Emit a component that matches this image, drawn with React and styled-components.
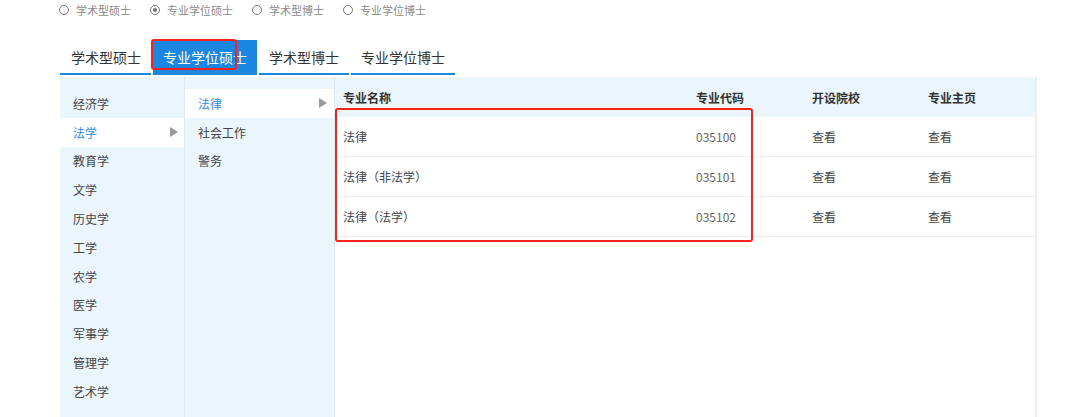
import React from "react";
import styled, { createGlobalStyle } from "styled-components";

const Global = createGlobalStyle`
  html, body { margin: 0; padding: 0; background: #fff; }
  body { font-family: "Noto Sans CJK SC", "Noto Sans", sans-serif; overflow: hidden; }
  * { box-sizing: border-box; }
`;

const Page = styled.div`
  padding-left: 58px;
  width: 1080px;
  height: 417px;
  overflow: hidden;
`;

const RadioRow = styled.div`
  display: flex;
  align-items: center;
  gap: 19px;
  height: 20px;
  padding-left: 1px;
`;

const RadioItem = styled.label`
  display: flex;
  align-items: center;
  gap: 7px;
  font-size: 11px;
  color: #8a8a8a;
  line-height: 20px;
`;

const Circle = styled.span`
  width: 10px;
  height: 10px;
  border: 1px solid #7a7a7a;
  border-radius: 50%;
  display: flex;
  align-items: center;
  justify-content: center;
  &::after {
    content: "";
    width: 4px;
    height: 4px;
    border-radius: 50%;
    background: ${(p) => (p.$checked ? "#6f6f6f" : "transparent")};
  }
`;

const TabBar = styled.div`
  position: relative;
  display: flex;
  gap: 2px;
  margin-top: 20px;
  margin-left: 2px;
  height: 36px;
`;

const Tab = styled.div`
  height: 35px;
  padding: 0 10px 0 ${(p) => (p.$first ? 11 : 10)}px;
  display: flex;
  align-items: center;
  font-size: 14px;
  color: ${(p) => (p.$active ? "#fff" : "#333")};
  background: ${(p) => (p.$active ? "#1b87e0" : "transparent")};
  border-bottom: 2px solid #1b87e0;
`;

const Annotation = styled.div`
  position: absolute;
  border: 2.5px solid #f5231b;
  border-radius: 3px;
  pointer-events: none;
`;

const Panel = styled.div`
  display: flex;
  margin-top: 1px;
  margin-left: 2px;
  width: 977px;
  height: 360px;
`;

const MenuCol = styled.div`
  width: ${(p) => p.$w}px;
  flex: none;
  background: #eaf5fc;
  border-right: 1px solid #dde9f2;
  padding-top: 12px;
`;

const MenuItem = styled.div`
  height: 28.8px;
  display: flex;
  align-items: center;
  justify-content: space-between;
  padding: 0 ${(p) => p.$pr}px 0 13px;
  font-size: 12px;
  color: ${(p) => (p.$active ? "#2a8be2" : "#444")};
  background: ${(p) => (p.$active ? "#fff" : "transparent")};
`;

const Arrow = styled.span`
  width: 0;
  height: 0;
  border-top: 5px solid transparent;
  border-bottom: 5px solid transparent;
  border-left: 8px solid #9a9a9a;
`;

const TableWrap = styled.div`
  position: relative;
  flex: 1;
  border-right: 2px solid #eeeeee;
  background: #fff;
`;

const Grid = styled.div`
  display: grid;
  grid-template-columns: 353px 116px 116px 1fr;
`;

const HeadCell = styled.div`
  height: 40px;
  background: #eaf5fc;
  display: flex;
  align-items: center;
  padding-left: 8px;
  font-size: 12px;
  font-weight: 700;
  color: #333;
  border-top: 1px solid #f0f6fa;
`;

const Cell = styled.div`
  height: 40px;
  display: flex;
  align-items: center;
  padding-left: 8px;
  font-size: 12px;
  color: ${(p) => (p.$num ? "#666" : "#444")};
  border-bottom: 1px solid #eeeeee;
`;

const radios = [
  { label: "学术型硕士" },
  { label: "专业学位硕士", checked: true },
  { label: "学术型博士" },
  { label: "专业学位博士" },
];

const tabs = ["学术型硕士", "专业学位硕士", "学术型博士", "专业学位博士"];

const subjects = ["经济学", "法学", "教育学", "文学", "历史学", "工学", "农学", "医学", "军事学", "管理学", "艺术学"];
const subs = ["法律", "社会工作", "警务"];

const rows = [
  ["法律", "035100"],
  ["法律（非法学）", "035101"],
  ["法律（法学）", "035102"],
];

export default function App() {
  return (
    <>
      <Global />
      <Page>
        <RadioRow>
          {radios.map((r) => (
            <RadioItem key={r.label}>
              <Circle $checked={r.checked} />
              {r.label}
            </RadioItem>
          ))}
        </RadioRow>
        <TabBar>
          {tabs.map((t, i) => (
            <Tab key={t} $active={i === 1} $first={i === 0}>
              {t}
            </Tab>
          ))}
          <Annotation style={{ left: 91, top: -1, width: 86, height: 31 }} />
        </TabBar>
        <Panel>
          <MenuCol $w={125}>
            {subjects.map((s) => (
              <MenuItem key={s} $active={s === "法学"} $pr={6}>
                {s}
                {s === "法学" && <Arrow />}
              </MenuItem>
            ))}
          </MenuCol>
          <MenuCol $w={150}>
            {subs.map((s) => (
              <MenuItem key={s} $active={s === "法律"} $pr={7}>
                {s}
                {s === "法律" && <Arrow />}
              </MenuItem>
            ))}
          </MenuCol>
          <TableWrap>
            <Grid>
              <HeadCell>专业名称</HeadCell>
              <HeadCell>专业代码</HeadCell>
              <HeadCell>开设院校</HeadCell>
              <HeadCell>专业主页</HeadCell>
              {rows.map(([name, code]) => (
                <React.Fragment key={code}>
                  <Cell>{name}</Cell>
                  <Cell $num>{code}</Cell>
                  <Cell>查看</Cell>
                  <Cell>查看</Cell>
                </React.Fragment>
              ))}
            </Grid>
            <Annotation style={{ left: 0, top: 31, width: 418, height: 134 }} />
          </TableWrap>
        </Panel>
      </Page>
    </>
  );
}
